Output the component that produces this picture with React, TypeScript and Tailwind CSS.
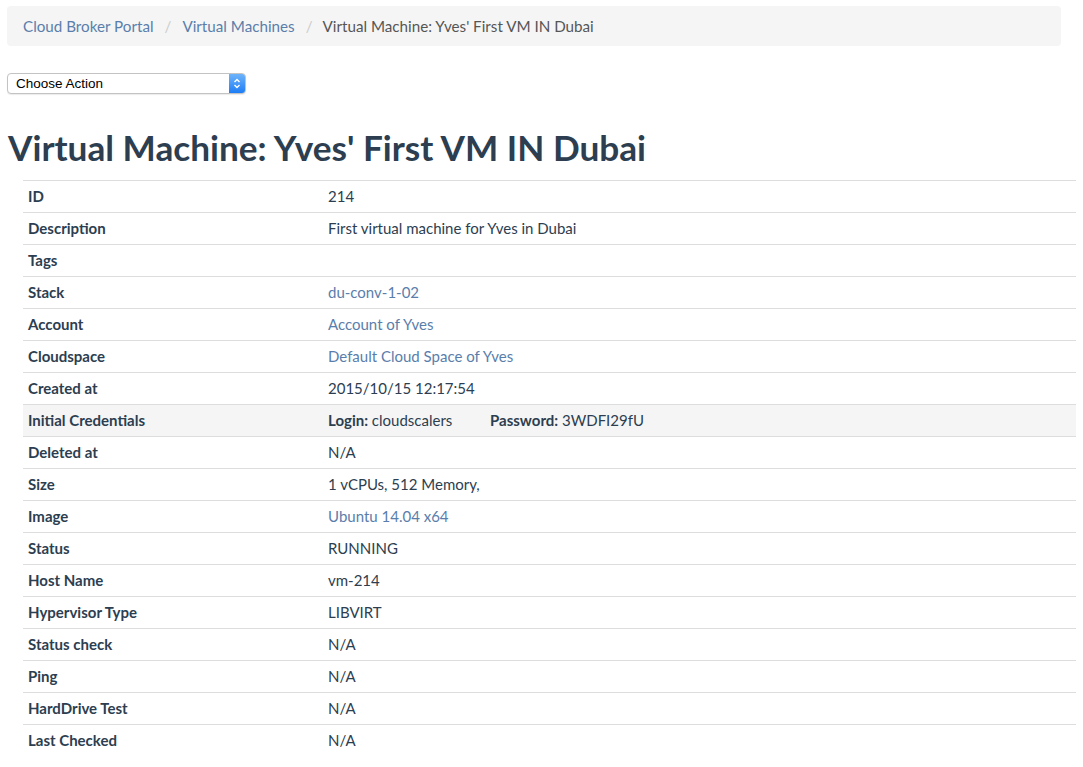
const rows: { label: string; value: React.ReactNode; shade?: boolean }[] = [
  { label: 'ID', value: '214' },
  { label: 'Description', value: 'First virtual machine for Yves in Dubai' },
  { label: 'Tags', value: '' },
  { label: 'Stack', value: <a className="text-[#5a7eab]">du-conv-1-02</a> },
  { label: 'Account', value: <a className="text-[#5a7eab]">Account of Yves</a> },
  { label: 'Cloudspace', value: <a className="text-[#5a7eab]">Default Cloud Space of Yves</a> },
  { label: 'Created at', value: '2015/10/15 12:17:54' },
  {
    label: 'Initial Credentials',
    shade: true,
    value: (
      <span className="flex">
        <span className="w-[162px]">
          <b>Login:</b> cloudscalers
        </span>
        <span>
          <b>Password:</b> 3WDFI29fU
        </span>
      </span>
    ),
  },
  { label: 'Deleted at', value: 'N/A' },
  { label: 'Size', value: '1 vCPUs, 512 Memory,' },
  { label: 'Image', value: <a className="text-[#5a7eab]">Ubuntu 14.04 x64</a> },
  { label: 'Status', value: 'RUNNING' },
  { label: 'Host Name', value: 'vm-214' },
  { label: 'Hypervisor Type', value: 'LIBVIRT' },
  { label: 'Status check', value: 'N/A' },
  { label: 'Ping', value: 'N/A' },
  { label: 'HardDrive Test', value: 'N/A' },
  { label: 'Last Checked', value: 'N/A' },
];

export default function App() {
  return (
    <div className="min-h-[767px] bg-white font-['Lato',sans-serif] text-[15px] text-[#2c3e50]">
      {/* Breadcrumb */}
      <div className="pt-[6px] pl-[7px] pr-[22px]">
        <div className="flex h-10 items-center rounded bg-[#f5f5f5] px-4 text-[15.2px]">
          <a className="text-[#5a7eab]">Cloud Broker Portal</a>
          <span className="px-[11px] text-[#ccc]">/</span>
          <a className="text-[#5a7eab]">Virtual Machines</a>
          <span className="pl-[11px] pr-[10px] text-[#ccc]">/</span>
          <span className="text-[#555]">Virtual Machine: Yves' First VM IN Dubai</span>
        </div>
      </div>

      {/* Action select */}
      <div className="mt-[27px] pl-[7px]">
        <div className="flex h-[21px] w-[239px] items-stretch overflow-hidden rounded-[4px] border border-[#c3c3c3] bg-white shadow-[0_1px_1px_rgba(0,0,0,0.08)]">
          <span className="flex-1 pl-[8px] font-['Liberation_Sans',sans-serif] text-[13.5px] leading-[19px] text-black">
            Choose Action
          </span>
          <span className="flex w-[16px] items-center justify-center bg-gradient-to-b from-[#6cb3fa] to-[#1a7df5]">
            <svg width="8" height="13" viewBox="0 0 8 13" fill="none" stroke="white" strokeWidth="1.4">
              <path d="M1.5 5 L4 2.5 L6.5 5" />
              <path d="M1.5 8 L4 10.5 L6.5 8" />
            </svg>
          </span>
        </div>
      </div>

      {/* Title */}
      <h1 className="mt-[31px] pl-[8px] text-[35.2px] font-bold leading-[44px]">
        Virtual Machine: Yves' First VM IN Dubai
      </h1>

      {/* Details */}
      <div className="mt-[11px] pl-[23px] pr-[7px]">
        {rows.map((r) => (
          <div
            key={r.label}
            className={`flex h-8 items-center border-t border-[#ddd] ${r.shade ? 'bg-[#f5f5f5]' : ''}`}
          >
            <div className="w-[300px] pl-[5px] font-bold">{r.label}</div>
            <div className="pl-[5px]">{r.value}</div>
          </div>
        ))}
      </div>
    </div>
  );
}
